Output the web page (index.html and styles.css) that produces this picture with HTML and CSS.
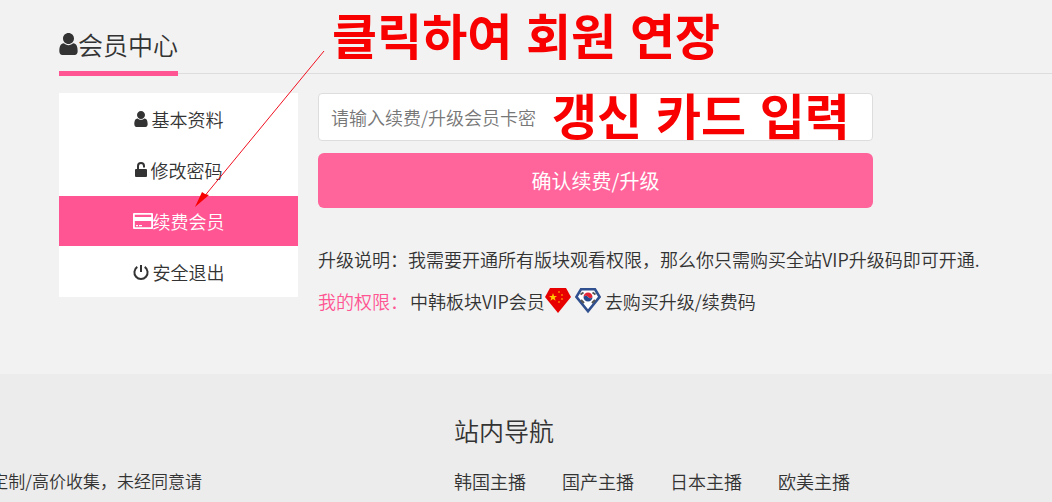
FILE: index.html
```html
<!DOCTYPE html>
<html lang="zh-CN">
<head>
    <meta charset="UTF-8">
    <meta name="viewport" content="width=device-width, initial-scale=1.0">
    <title>会员中心</title>
    <link rel="stylesheet" href="styles.css">
</head>
<body>
    <svg class="sprite" aria-hidden="true">
        <symbol id="icon-user" viewBox="0 0 1280 1536">
            <path d="M1280 1271c0 141-93 265-206 265H206C93 1536 0 1412 0 1271c0-254 63-548 321-548 80 78 189 126 319 126s239-48 319-126c258 0 321 294 321 548zM1024 384c0 212-172 384-384 384S256 596 256 384 428 0 640 0s384 172 384 384z"/>
        </symbol>
    </svg>

    <main class="member">
        <div class="member-head">
            <h1 class="member-title"><svg class="icon-title"><use href="#icon-user"/></svg>会员中心</h1>
        </div>

        <div class="member-body">
            <nav class="side-menu">
                <a href="#" class="side-item spaced">
                    <svg class="icon-user"><use href="#icon-user"/></svg>
                    <span>基本资料</span>
                </a>
                <a href="#" class="side-item spaced">
                    <svg class="icon-lock" viewBox="0 0 12 16"><path d="M1 7h10q1 0 1 1v6q0 1-1 1H1q-1 0-1-1V8q0-1 1-1z"/><path class="line" d="M3 8V4a3 3 0 0 1 6 0V5.500"/></svg>
                    <span>修改密码</span>
                </a>
                <a href="#" class="side-item active">
                    <svg class="icon-card" viewBox="0 0 20 16"><rect class="line thin" x="0.800" y="0.800" width="18.400" height="14.400" rx="1.200"/><path d="M1 4h18v4H1zM3 12h2v1.300H3zM6 12h3v1.300H6z"/></svg>
                    <span>续费会员</span>
                </a>
                <a href="#" class="side-item spaced">
                    <svg class="icon-power" viewBox="0 0 16 16"><path class="line" d="M4.300 2.900a6.600 6.600 0 1 0 7.400 0M8 1v7"/></svg>
                    <span>安全退出</span>
                </a>
            </nav>

            <section class="content">
                <form class="renew-form">
                    <input type="text" class="card-input" placeholder="请输入续费/升级会员卡密" aria-label="会员卡密">
                    <button type="button" class="submit-btn">确认续费/升级</button>
                </form>
                <p class="note">升级说明：我需要开通所有版块观看权限，那么你只需购买全站VIP升级码即可开通.</p>
                <p class="rights">
                    <span class="rights-label">我的权限：</span>
                    <span>中韩板块VIP会员</span>
                    <svg class="gem" viewBox="0 0 26 26"><path fill="#e80000" d="M5 0h16l5 9-13 16L0 9z"/><path fill="#ffc800" d="M8 5l1 3h3l-2.300 1.800.9 3L8 11l-2.600 1.800.9-3L4 8h3z"/><g fill="#ff7a00"><circle cx="14" cy="4" r="1"/><circle cx="17" cy="7" r="1"/><circle cx="17" cy="11" r="1"/><circle cx="14" cy="14" r="1"/></g></svg>
                    <svg class="gem gem-kr" viewBox="0 0 26 26"><path fill="#fff" stroke="#31508f" stroke-width="2.600" d="M6 1.300h14l4.600 7.600L13 23.300 1.400 8.900z"/><path stroke="#555" stroke-width="2" d="M5.500 6.500l3-2M17.500 4.500l3 2M6 12l3 3M20 12l-3 3"/><path fill="#e32636" d="M8.500 9a4.500 4.500 0 0 1 9 0q-2.200 2.500-4.500 0t-4.500 0z"/><path fill="#24498f" d="M8.500 9a4.500 4.500 0 0 0 9 0q-2.200 2.500-4.500 0t-4.500 0z"/></svg>
                    <a href="#" class="buy-link">去购买升级/续费码</a>
                </p>
            </section>
        </div>
    </main>

    <footer class="footer">
        <div class="footer-about"><p>定制/高价收集，未经同意请</p></div>
        <div class="footer-nav">
            <h2>站内导航</h2>
            <div class="footer-links">
                <a href="#">韩国主播</a>
                <a href="#">国产主播</a>
                <a href="#">日本主播</a>
                <a href="#">欧美主播</a>
            </div>
        </div>
    </footer>

    <!-- red guide marks over the page -->
    <div class="mark mark-menu" lang="ko">클릭하여 회원 연장</div>
    <div class="mark mark-input" lang="ko">갱신 카드 입력</div>
    <svg class="mark-arrow" viewBox="0 0 130 157"><path class="arrow-line" d="M129 0L8 147"/><path class="arrow-head" d="M0 156l7-15 3 2 4 1z"/></svg>
</body>
</html>
```
FILE: styles.css
```css
:root {
    --pink: #ff5593;
    --pink-light: #ff649b;
    --bg: #f2f2f2;
    --footer-bg: #ececec;
    --text: #333;
    --border: #ddd;
    --mark: #f80000;
}

* {
    margin: 0;
    padding: 0;
    box-sizing: border-box;
}

body {
    position: relative;
    min-height: 100vh;
    display: flex;
    flex-direction: column;
    overflow: hidden;
    background: var(--bg);
    color: var(--text);
    font-family: "Noto Sans CJK SC", sans-serif;
    font-size: 18px;
    font-weight: 350;
    line-height: 26px;
}

a {
    color: inherit;
    text-decoration: none;
}

svg {
    fill: currentColor;
    flex: none;
}

.sprite {
    position: absolute;
    width: 0;
    height: 0;
}

.line {
    fill: none;
    stroke: currentColor;
    stroke-width: 2;
}

.member {
    padding: 16px 0 60px 59px;
}

.member-head {
    display: flex;
    height: 58px;
    border-bottom: 1px solid var(--border);
}

.member-title {
    display: flex;
    align-items: center;
    height: 60px;
    border-bottom: 5px solid var(--pink);
    font-size: 25px;
    font-weight: 350;
}

.icon-title {
    width: 19px;
    height: 22px;
}

.member-body {
    display: flex;
    gap: 20px;
    margin-top: 19px;
}

.side-menu {
    flex: 0 0 239px;
    align-self: flex-start;
    background: #fff;
}

.side-item {
    display: flex;
    align-items: center;
    justify-content: center;
    height: 51px;
    border-top: 1px solid #fff;
}

.side-item.spaced {
    gap: 4px;
}

.side-item.active {
    background: var(--pink);
    color: #fff;
}

.icon-user {
    width: 14px;
    height: 16px;
}

.icon-lock {
    width: 12px;
    height: 16px;
}

.icon-card {
    width: 20px;
    height: 16px;
}

.icon-power {
    width: 16px;
    height: 16px;
}

.content {
    flex: 1;
    min-width: 0;
}

.renew-form {
    display: flex;
    flex-direction: column;
    gap: 12px;
    max-width: 555px;
}

.card-input {
    width: 100%;
    height: 48px;
    padding: 0 12px;
    background: #fff;
    border: 1px solid var(--border);
    border-radius: 4px;
    color: var(--text);
    font: inherit;
}

.card-input::placeholder {
    color: #777;
}

.submit-btn {
    height: 55px;
    background: var(--pink-light);
    border: none;
    border-radius: 6px;
    color: #fff;
    font: inherit;
    font-size: 20px;
    font-weight: 400;
    cursor: pointer;
}

.note {
    margin-top: 38px;
}

.rights {
    display: flex;
    align-items: center;
    margin-top: 16px;
}

.rights-label {
    margin-right: 2px;
    color: var(--pink);
}

.gem {
    width: 26px;
    height: 26px;
}

.gem-kr {
    margin: 0 4px;
}

.footer {
    flex: 1;
    display: flex;
    align-items: flex-start;
    background: var(--footer-bg);
}

.footer-about {
    display: flex;
    justify-content: flex-end;
    width: 202px;
    margin-right: 252px;
    padding-top: 94px;
    overflow: hidden;
    font-size: 17px;
    white-space: nowrap;
}

.footer-nav {
    padding-top: 40px;
}

.footer-nav h2 {
    margin-bottom: 22px;
    font-size: 25px;
    font-weight: 350;
    line-height: 32px;
}

.footer-links {
    display: flex;
    gap: 36px;
}

.mark {
    position: absolute;
    color: var(--mark);
    font-family: "Noto Sans CJK KR", sans-serif;
    font-size: 49px;
    font-weight: 700;
    line-height: 50px;
    white-space: nowrap;
    pointer-events: none;
}

.mark-menu {
    left: 332px;
    top: 9px;
}

.mark-input {
    left: 552px;
    top: 89px;
}

.mark-arrow {
    position: absolute;
    left: 195px;
    top: 51px;
    width: 130px;
    height: 157px;
    pointer-events: none;
}

.arrow-line {
    fill: none;
    stroke: #f01020;
    stroke-width: 1;
}

.arrow-head {
    fill: var(--mark);
}
```
